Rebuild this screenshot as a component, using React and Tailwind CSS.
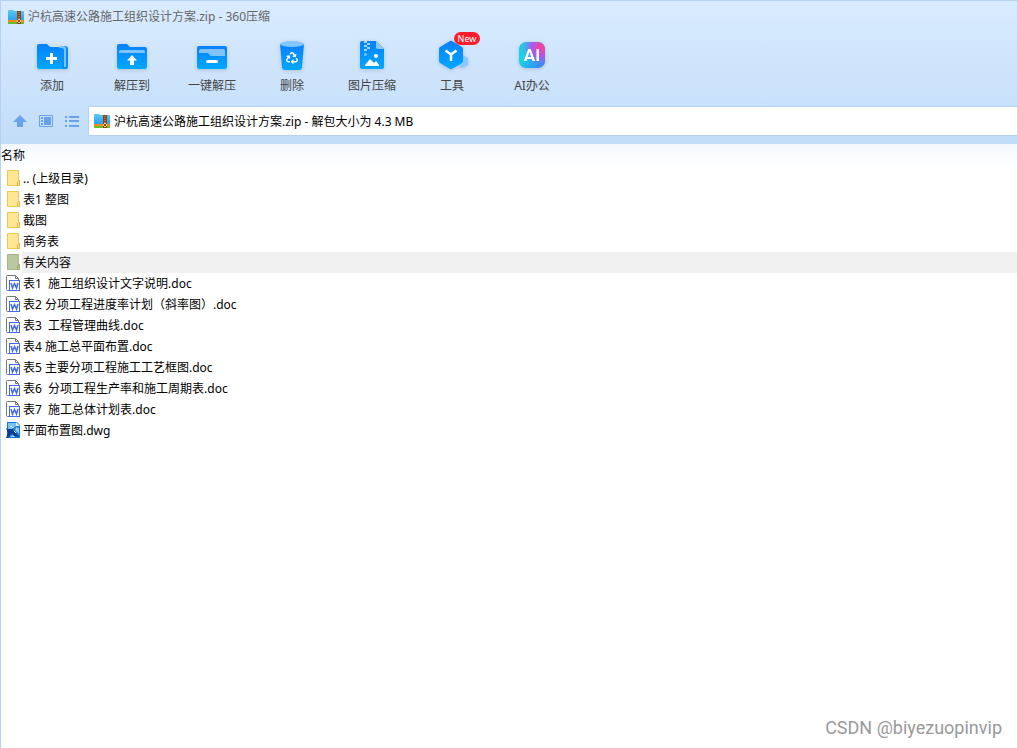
import React, { useState } from "react";
import { FaRecycle } from "react-icons/fa";

const ZipIcon = () => (
  <svg width="16" height="14" viewBox="0 0 16 14" className="shrink-0" aria-hidden="true">
    <defs>
      <linearGradient id="zipBody" x1="0" y1="0" x2="0" y2="1">
        <stop offset="0" stopColor="#5cc8f8" />
        <stop offset="1" stopColor="#2a9df0" />
      </linearGradient>
    </defs>
    <path d="M0 1q0-1 1-1h4l1 1h9q1 0 1 1v9H0z" fill="url(#zipBody)" />
    <path d="M0 10h16v2H0z" fill="#f58a1f" />
    <path d="M0 12h16v2H0z" fill="#6dbb2b" />
    <path d="M9 1h4v13H9z" fill="#8a4316" />
    <path d="M11 2v7" stroke="#e6a04a" strokeWidth="1" strokeDasharray="1 1" />
    <path d="M10 9h2v1h-2zM9 10h1v2H9zM12 10h1v2h-1zM10 12h2v1h-2z" fill="#f7d48b" />
  </svg>
);

const AddIcon = () => (
  <>
    <path d="M1 6q0-2 2-2h8l3 3h13q2 0 2 2v18q0 2-2 2H3q-2 0-2-2z" fill="url(#toolBlue)" />
    <path d="M26 6h3q3 0 3 3v18q0 2-2 2h-4z" fill="#098df8" />
    <path d="M24 6h3q3 0 3 3v18h-2V10q0-2-2-2h-3z" fill="#7cc4ff" />
    <path d="M10 18.500h11M15.500 13v11" stroke="#fff" strokeWidth="3" />
  </>
);

const ExtractIcon = () => (
  <>
    <path d="M1 6q0-2 2-2h8l3 3h15q2 0 2 2v18q0 2-2 2H3q-2 0-2-2z" fill="url(#toolBlue)" />
    <path d="M3 13v-1q0-2 2-2h22q2 0 2 2v1z" fill="#7fc4ff" />
    <path d="M16 15l5 5.500h-3V25h-4v-4.500h-3z" fill="#fff" />
  </>
);

const OneKeyIcon = () => (
  <>
    <rect x="1" y="6" width="30" height="23" rx="2" fill="url(#toolBlue)" />
    <path d="M3 11q0-2 2-2h22q2 0 2 2v5H15q-1 0-2-2l-1-1H3z" fill="#7fc4ff" />
    <path d="M11.500 21.500h9" stroke="#fff" strokeWidth="3" strokeLinecap="round" />
  </>
);

const DeleteIcon = () => (
  <>
    <path d="M4 4l2 23q0 3 3 3h14q3 0 3-3l2-23z" fill="url(#toolBlue)" />
    <ellipse cx="16" cy="4" rx="12" ry="3" fill="#82c6ff" />
    <FaRecycle x="10" y="12" size={12} color="#fff" />
  </>
);

const ImageIcon = () => (
  <>
    <path d="M4 3q0-2 2-2h14l8 8v18q0 2-2 2H6q-2 0-2-2z" fill="url(#toolBlue)" />
    <path d="M20 1l8 8h-6q-2 0-2-2z" fill="#8dcbff" />
    <path d="M8 1h3v2H8zM11 3h3v2h-3zM8 5h3v2H8zM11 7h3v2h-3zM8 9h3v2H8z" fill="#a6d5ff" />
    <circle cx="9.500" cy="14.500" r="1.500" fill="#79c3ff" />
    <circle cx="20" cy="16" r="2" fill="#fff" />
    <path d="M9 26v-1l5-6 4 4 2-2 3 4v1z" fill="#fff" />
  </>
);

const ToolsIcon = () => (
  <>
    <path d="M27 15l5 3v7l-6 3-5-3v-7z" fill="#8bc8ff" />
    <path d="M14 1q1-.600 2 0l10 6q1 .600 1 2v12q0 1-1 2l-10 6q-1 .600-2 0L4 23q-1-1-1-2V9q0-1 1-2z" fill="url(#toolBlue)" />
    <path d="M9.500 10.500l5.500 4 5.500-4M15 14.500V21" stroke="#fff" strokeWidth="2.500" fill="none" />
  </>
);

const AiIcon = () => (
  <>
    <rect x="3" y="2" width="26" height="26" rx="7" fill="url(#aiBase)" />
    <rect x="3" y="2" width="26" height="26" rx="7" fill="url(#aiPink)" />
    <text
      x="16"
      y="21"
      textAnchor="middle"
      fontSize="17"
      fontWeight="700"
      fill="#fff"
      className="font-['Roboto','Liberation_Sans',sans-serif]"
    >
      AI
    </text>
  </>
);

const TOOLS = [
  { label: "添加", icon: AddIcon },
  { label: "解压到", icon: ExtractIcon },
  { label: "一键解压", icon: OneKeyIcon },
  { label: "删除", icon: DeleteIcon },
  { label: "图片压缩", icon: ImageIcon },
  { label: "工具", icon: ToolsIcon, badge: "New" },
  { label: "AI办公", icon: AiIcon },
];

const FILES = [
  { name: ".. (上级目录)", type: "folder" },
  { name: "表1 整图", type: "folder" },
  { name: "截图", type: "folder" },
  { name: "商务表", type: "folder" },
  { name: "有关内容", type: "folder" },
  { name: "表1  施工组织设计文字说明.doc", type: "doc" },
  { name: "表2 分项工程进度率计划（斜率图）.doc", type: "doc" },
  { name: "表3  工程管理曲线.doc", type: "doc" },
  { name: "表4 施工总平面布置.doc", type: "doc" },
  { name: "表5 主要分项工程施工工艺框图.doc", type: "doc" },
  { name: "表6  分项工程生产率和施工周期表.doc", type: "doc" },
  { name: "表7  施工总体计划表.doc", type: "doc" },
  { name: "平面布置图.dwg", type: "dwg" },
];

const FileIcon = ({ type, selected }) => (
  <svg width="16" height="17" viewBox="0 0 16 17" className="shrink-0" aria-hidden="true">
    {type === "folder" && (
      <>
        <path
          d="M1.500.500h11v15h-11z"
          fill={selected ? "#b9c8a0" : "#ffe694"}
          stroke={selected ? "#a7b685" : "#ecc955"}
        />
        <path
          d="M11.500 15.500v-4l1-1h1v5z"
          fill={selected ? "#b2c295" : "#ffe08a"}
          stroke={selected ? "#9dac78" : "#e3b93c"}
        />
      </>
    )}
    {type === "doc" && (
      <>
        <path d="M3.500 15.500h-2q-1 0-1-1v-13q0-1 1-1h8l3 3v2" fill="#fff" stroke="#777" />
        <path d="M9.500.500v3h3" fill="none" stroke="#777" />
        <rect x="3.500" y="5.500" width="10" height="10" fill="#fff" stroke="#4169f5" />
        <path d="M5 8l1.500 5L8.500 8.500l2 4.500L12 8" fill="none" stroke="#3e68f6" strokeWidth="1.500" />
      </>
    )}
    {type === "dwg" && (
      <>
        <path d="M1 0h10l3 3v13H1z" fill="#1876d8" />
        <path d="M2 1h8v3L2 9z" fill="#74c3f5" />
        <path d="M10 0v4h4z" fill="#d9f1ff" />
        <path d="M10 5l3 1v6L9 8z" fill="#8ecbf8" />
        <path d="M0 6l2 1 4 0 3 3 4 5-5-1-2-3-4 5H0l2-5z" fill="#093d91" />
        <path d="M4 15l3-2 2 2z" fill="#a5d8ff" />
        <path d="M4 5l2-1M6 6l2-1M8 9l2 2" stroke="#e2f5ff" />
      </>
    )}
  </svg>
);

const App = () => {
  const [selected, setSelected] = useState(4);
  const [path, setPath] = useState("沪杭高速公路施工组织设计方案.zip - 解包大小为 4.3 MB");

  return (
    <div className="relative min-h-screen bg-white border-l border-[#b5d2f5] text-xs text-black font-['Noto_Sans','Noto_Sans_CJK_SC',sans-serif]">
      <svg width="0" height="0" className="absolute" aria-hidden="true">
        <defs>
          <linearGradient id="toolBlue" x1="0" y1="0" x2="0" y2="1">
            <stop offset="0" stopColor="#0880fc" />
            <stop offset="1" stopColor="#00a8ff" />
          </linearGradient>
          <linearGradient id="aiBase" x1="0" y1="0" x2="1" y2="1">
            <stop offset="0" stopColor="#29c5e8" />
            <stop offset="0.400" stopColor="#18d4e5" />
            <stop offset="1" stopColor="#4076fa" />
          </linearGradient>
          <radialGradient id="aiPink" cx="0.850" cy="0.200" r="0.750">
            <stop offset="0" stopColor="#ff3e91" />
            <stop offset="0.500" stopColor="#b84df2" stopOpacity="0.900" />
            <stop offset="1" stopColor="#6283f4" stopOpacity="0" />
          </radialGradient>
        </defs>
      </svg>

      <header className="border-t border-[#b5d2f5] bg-linear-to-b from-[#d9ebff] to-[#c2ddf8] pb-2">
        {/* Title bar */}
        <div className="flex h-8 items-center gap-1 pl-[7px] text-[#666]">
          <ZipIcon />
          <h1>沪杭高速公路施工组织设计方案.zip - 360压缩</h1>
        </div>

        {/* Toolbar */}
        <div className="flex h-[73px] pl-[11px] pt-[7px]">
          {TOOLS.map(({ label, icon: Icon, badge }) => (
            <button key={label} className="relative flex w-20 flex-col items-center gap-1 text-[#444]">
              <svg width="32" height="32" viewBox="0 0 32 32" className="overflow-visible drop-shadow-sm" aria-hidden="true">
                <Icon />
              </svg>
              <span className="leading-5">{label}</span>
              {badge && (
                <span className="absolute left-[42px] -top-2 h-[13px] w-[26px] rounded-full bg-[#fb1c2c] text-center text-[9px] leading-[13px] text-white">
                  {badge}
                </span>
              )}
            </button>
          ))}
        </div>

        {/* Address bar */}
        <div className="flex h-[30px] items-center">
          <div className="flex w-[87px] shrink-0 items-center gap-3 pl-3 text-[#68a2ec]">
            <button aria-label="上级目录">
              <svg width="14" height="14" viewBox="0 0 14 14" fill="currentColor">
                <path d="M7 1l7 7h-4v5H4V8H0z" />
              </svg>
            </button>
            <button aria-label="预览">
              <svg width="14" height="14" viewBox="0 0 14 14" fill="none" stroke="currentColor">
                <path d="M.500 1.500h13v11H.500z" />
                <path d="M5 3h7v8H5z" fill="currentColor" stroke="none" />
                <path d="M2 4h2M2 7h2M2 10h2" strokeWidth="2" />
              </svg>
            </button>
            <button aria-label="列表">
              <svg width="14" height="14" viewBox="0 0 14 14" fill="none" stroke="currentColor" strokeWidth="2">
                <path d="M0 3h2M0 7h2M0 12h2M4 3h10M4 7h10M4 12h10" />
              </svg>
            </button>
          </div>
          <div className="flex h-[30px] flex-1 items-center gap-1 border border-r-0 border-[#b5d2f5] bg-white pl-[5px]">
            <ZipIcon />
            <input
              aria-label="路径"
              value={path}
              onChange={(e) => setPath(e.target.value)}
              className="min-w-0 flex-1 bg-transparent pt-px outline-none"
            />
          </div>
        </div>
      </header>

      {/* File list */}
      <table className="w-full border-collapse">
        <thead>
          <tr className="h-6 bg-linear-to-b from-[#f3f8fe] to-white">
            <th className="p-0 text-left font-normal">名称</th>
          </tr>
        </thead>
        <tbody>
          {FILES.map((file, i) => (
            <tr key={file.name} onClick={() => setSelected(i)}>
              <td className="p-0">
                <div className="flex h-[21px] items-center pl-[5px]">
                  <FileIcon type={file.type} selected={selected === i} />
                  <span
                    className={`flex h-full flex-1 items-center whitespace-pre pl-px ${
                      selected === i ? "bg-[#f0f0f0]" : ""
                    }`}
                  >
                    {file.name}
                  </span>
                </div>
              </td>
            </tr>
          ))}
        </tbody>
      </table>

      <div className="absolute bottom-2 right-[15px] font-['Roboto','Liberation_Sans',sans-serif] text-lg leading-6 text-[#999]">
        CSDN @biyezuopinvip
      </div>
    </div>
  );
};

export default App;
